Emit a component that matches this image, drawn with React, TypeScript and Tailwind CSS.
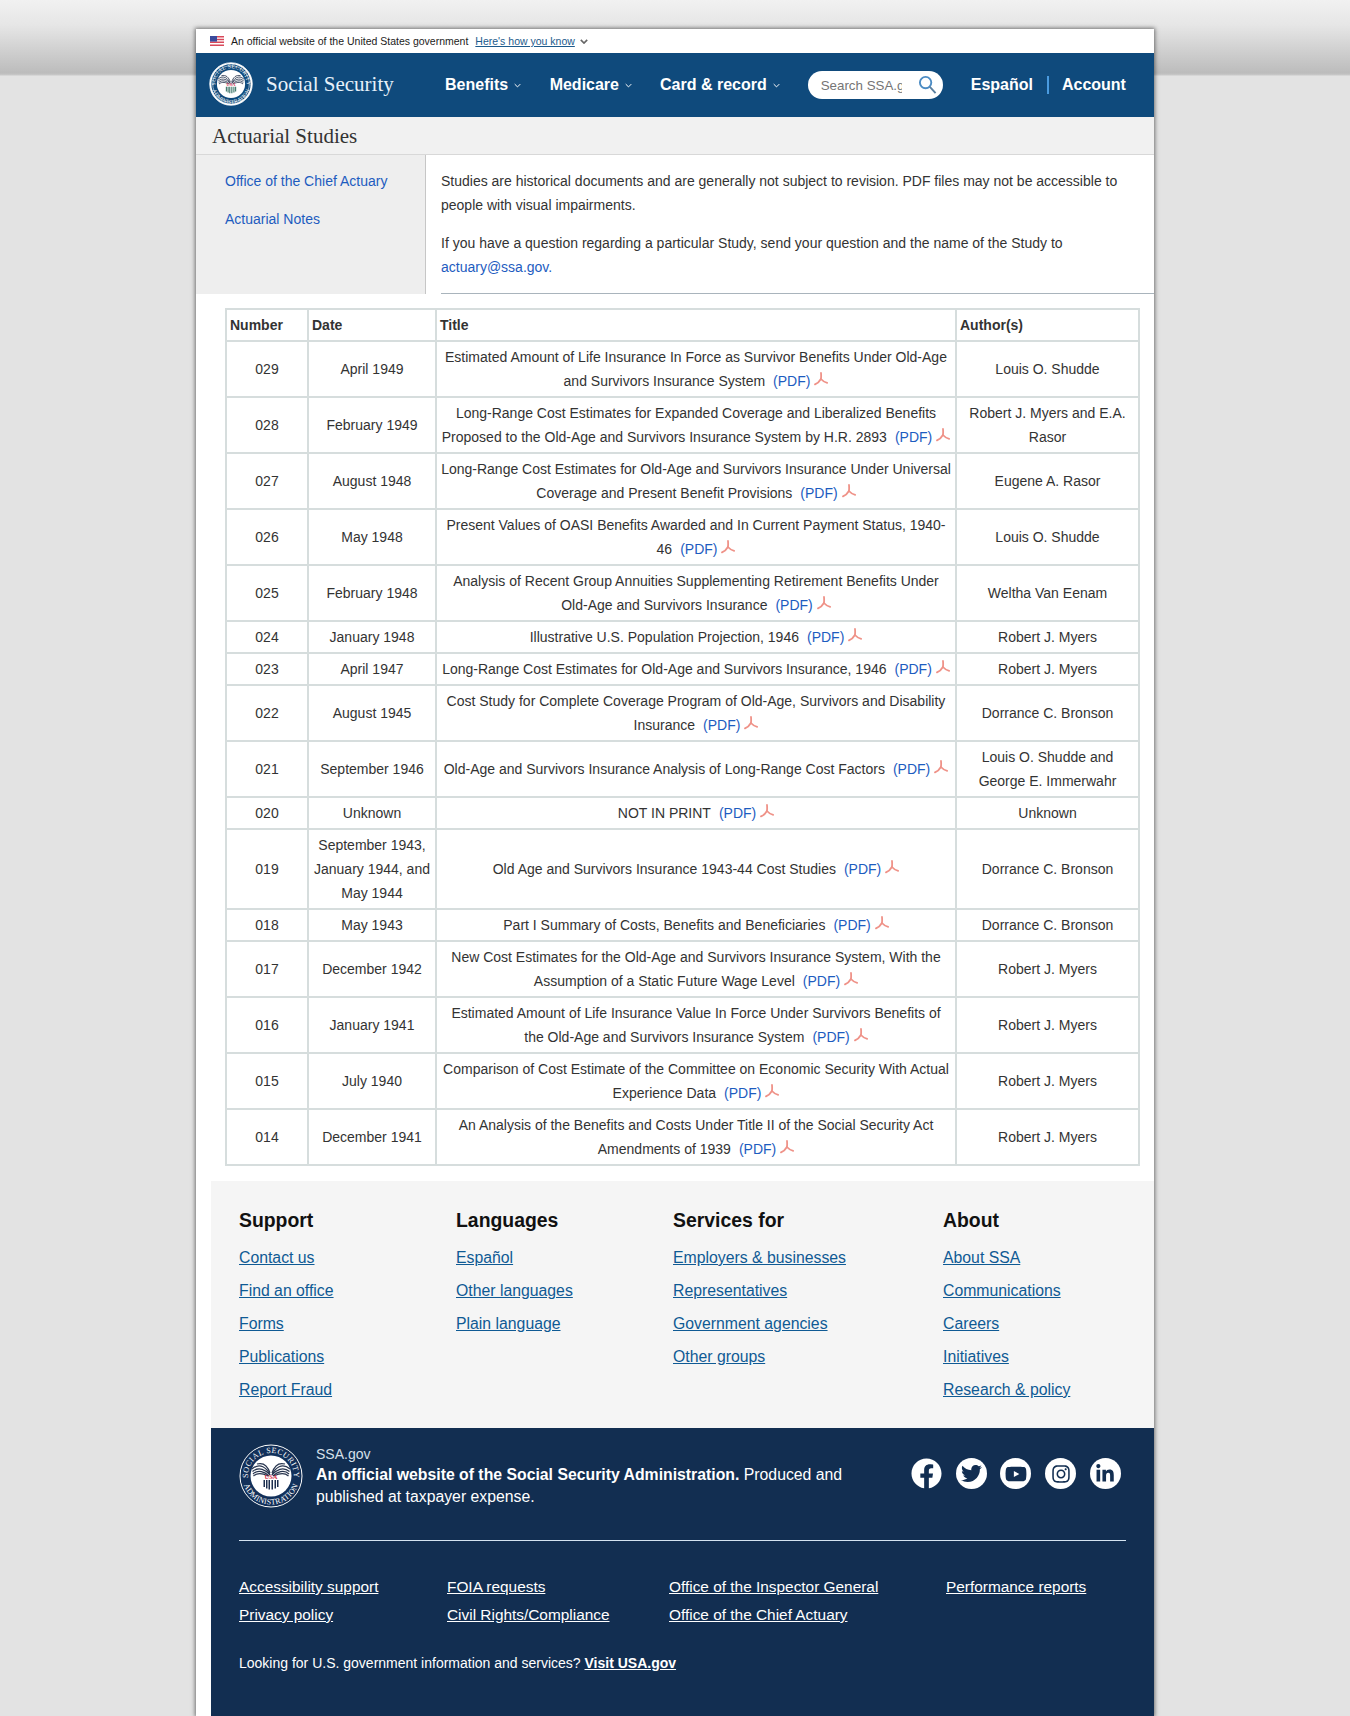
import { FaFacebook, FaInstagram, FaLinkedinIn, FaTwitter, FaYoutube } from 'react-icons/fa';

const rows = [
  { no: '029', date: 'April 1949', title: 'Estimated Amount of Life Insurance In Force as Survivor Benefits Under Old-Age and Survivors Insurance System', author: 'Louis O. Shudde' },
  { no: '028', date: 'February 1949', title: 'Long-Range Cost Estimates for Expanded Coverage and Liberalized Benefits Proposed to the Old-Age and Survivors Insurance System by H.R. 2893', author: 'Robert J. Myers and E.A. Rasor' },
  { no: '027', date: 'August 1948', title: 'Long-Range Cost Estimates for Old-Age and Survivors Insurance Under Universal Coverage and Present Benefit Provisions', author: 'Eugene A. Rasor' },
  { no: '026', date: 'May 1948', title: 'Present Values of OASI Benefits Awarded and In Current Payment Status, 1940-46', author: 'Louis O. Shudde' },
  { no: '025', date: 'February 1948', title: 'Analysis of Recent Group Annuities Supplementing Retirement Benefits Under Old-Age and Survivors Insurance', author: 'Weltha Van Eenam' },
  { no: '024', date: 'January 1948', title: 'Illustrative U.S. Population Projection, 1946', author: 'Robert J. Myers' },
  { no: '023', date: 'April 1947', title: 'Long-Range Cost Estimates for Old-Age and Survivors Insurance, 1946', author: 'Robert J. Myers' },
  { no: '022', date: 'August 1945', title: 'Cost Study for Complete Coverage Program of Old-Age, Survivors and Disability Insurance', author: 'Dorrance C. Bronson' },
  { no: '021', date: 'September 1946', title: 'Old-Age and Survivors Insurance Analysis of Long-Range Cost Factors', author: 'Louis O. Shudde and George E. Immerwahr' },
  { no: '020', date: 'Unknown', title: 'NOT IN PRINT', author: 'Unknown' },
  { no: '019', date: 'September 1943, January 1944, and May 1944', title: 'Old Age and Survivors Insurance 1943-44 Cost Studies', author: 'Dorrance C. Bronson' },
  { no: '018', date: 'May 1943', title: 'Part I Summary of Costs, Benefits and Beneficiaries', author: 'Dorrance C. Bronson' },
  { no: '017', date: 'December 1942', title: 'New Cost Estimates for the Old-Age and Survivors Insurance System, With the Assumption of a Static Future Wage Level', author: 'Robert J. Myers' },
  { no: '016', date: 'January 1941', title: 'Estimated Amount of Life Insurance Value In Force Under Survivors Benefits of the Old-Age and Survivors Insurance System', author: 'Robert J. Myers' },
  { no: '015', date: 'July 1940', title: 'Comparison of Cost Estimate of the Committee on Economic Security With Actual Experience Data', author: 'Robert J. Myers' },
  { no: '014', date: 'December 1941', title: 'An Analysis of the Benefits and Costs Under Title II of the Social Security Act Amendments of 1939', author: 'Robert J. Myers' },
];

const footerCols = [
  { head: 'Support', w: 'w-[217px]', links: ['Contact us', 'Find an office', 'Forms', 'Publications', 'Report Fraud'] },
  { head: 'Languages', w: 'w-[217px]', links: ['Español', 'Other languages', 'Plain language'] },
  { head: 'Services for', w: 'w-[270px]', links: ['Employers & businesses', 'Representatives', 'Government agencies', 'Other groups'] },
  { head: 'About', w: 'w-[180px]', links: ['About SSA', 'Communications', 'Careers', 'Initiatives', 'Research & policy'] },
];

const legal = [
  { w: 'w-[208px]', links: ['Accessibility support', 'Privacy policy'] },
  { w: 'w-[222px]', links: ['FOIA requests', 'Civil Rights/Compliance'] },
  { w: 'w-[277px]', links: ['Office of the Inspector General', 'Office of the Chief Actuary'] },
  { w: 'w-[180px]', links: ['Performance reports'] },
];

const PdfIcon = () => (
  <svg viewBox="0 0 14 14" className="inline-block w-[14px] h-[14px] ml-[4px] align-[0px]" fill="none" stroke="#ef9288" strokeWidth="1.8" strokeLinecap="round">
    <path d="M7 1c.2 2.2.2 4.3-.1 6C5.6 9.4 3.4 11.4 1 12.4" />
    <path d="M6.9 7c1.8 2 4 3.3 6.3 3.9" />
  </svg>
);

// feather strokes of one wing, the other is its mirror image
const wing = [
  'M31 31C28 24 21 18 13 25',
  'M31 31C27 26 20 22 13.5 27.5',
  'M30 32C26 28 19 25 14 30',
  'M29 32C25 30 19 28 14.5 32',
  'M31 29C29 23 25 18 18 20',
];

const Seal = ({ id, size, thick }: { id: string; size: number; thick?: boolean }) => (
  <svg viewBox="0 0 64 64" width={size} height={size} className="shrink-0">
    <circle cx="32" cy="32" r="31" fill={thick ? '#fff' : 'none'} stroke="#fff" strokeWidth="1" />
    <circle cx="32" cy="32" r={thick ? 28.6 : 30} fill={thick ? '#0f4a7c' : '#12305a'} />
    {thick && <circle cx="32" cy="32" r="26.6" fill="none" stroke="#fff" strokeWidth="0.8" />}
    <path id={`${id}t`} d="M9 32A23 23 0 0 1 55 32" fill="none" />
    <path id={`${id}b`} d="M3.5 32A28.5 28.5 0 0 0 60.5 32" fill="none" />
    <text fontFamily="'Liberation Serif', serif" fontSize="8" fill="#fff" letterSpacing="0.4" textAnchor="middle">
      <textPath href={`#${id}t`} startOffset="50%">SOCIAL SECURITY</textPath>
    </text>
    <text fontFamily="'Liberation Serif', serif" fontSize="8" fill="#fff" letterSpacing="0.2" textAnchor="middle">
      <textPath href={`#${id}b`} startOffset="50%">ADMINISTRATION</textPath>
    </text>
    <circle cx="32" cy="32" r="20.5" fill="#fff" />
    <g fill="none" stroke="#27344e" strokeWidth="1.2">
      {wing.map((d) => (
        <path key={d} d={d} />
      ))}
      <g transform="matrix(-1 0 0 1 64 0)">
        {wing.map((d) => (
          <path key={d} d={d} />
        ))}
      </g>
    </g>
    <text x="32" y="35" textAnchor="middle" fontFamily="'Liberation Serif', serif" fontSize="6.5" fontWeight="700" fill="#d8304a">USA</text>
    <path d="M24.5 36h1.5v7h-1.5zM27 36h1.5v8.5H27zM29.5 36H31v9.5h-1.5zM32.5 36H34v9.5h-1.5zM35.5 36H37v8.5h-1.5zM38 36h1.5v7H38z" fill={thick ? '#2c6a5c' : '#1c2f4f'} />
  </svg>
);

const Flag = () => (
  <svg viewBox="0 0 14 10" className="w-[14px] h-[10px]">
    <rect width="14" height="10" fill="#fff" />
    <path d="M0 0h14v1.4H0zM0 2.8h14v1.4H0zM0 5.6h14V7H0zM0 8.4h14V10H0z" fill="#d8485a" />
    <rect width="7" height="5.6" fill="#3a4a9c" />
  </svg>
);

const Chevron = ({ className, sw = 1.4 }: { className: string; sw?: number }) => (
  <svg viewBox="0 0 10 6" className={className} fill="none" stroke="currentColor" strokeWidth={sw}>
    <path d="M1 1l4 4 4-4" />
  </svg>
);

const Social = ({ children, text }: { children: React.ReactNode; text: string }) => (
  <div className={`w-[31px] h-[31px] rounded-full bg-white flex items-center justify-center text-[#122e51] ${text}`}>{children}</div>
);

const cell = 'border-2 border-[#d6dddd] px-[3px] py-[3px] text-center align-middle';
const headCell = 'border-2 border-[#d6dddd] px-[3px] py-[3px] text-left font-bold';

export default function App() {
  return (
    <div className="h-[1716px] overflow-hidden bg-[#e3e3e3] bg-[linear-gradient(#f1f1f1_0,#e6e6e6_25px,#bcbcbc_73px,#c9c9c9_75px,#e3e3e3_76px)] pt-[29px] font-['Liberation_Sans',sans-serif] text-[14px] leading-[24px] text-[#333]">
      <div className="ml-[196px] w-[958px] h-[1687px] bg-white shadow-[0_0_4px_1px_rgba(0,0,0,0.5)]">
        {/* gov banner */}
        <div className="h-[24px] flex items-center pl-[14px] text-[10.5px] text-[#1b1b1b]">
          <Flag />
          <span className="ml-[7px]">An official website of the United States government</span>
          <a className="ml-[7px] text-[#1c5a8c] underline">Here's how you know</a>
          <Chevron className="ml-[5px] w-[8px] h-[5px] mt-px text-[#666]" sw={2} />
        </div>

        {/* main nav */}
        <div className="h-[64px] bg-[#0f4a7c] flex items-center text-white">
          <div className="ml-[13px] -mt-[2px]">
            <Seal id="hdr" size={44} thick />
          </div>
          <span className="ml-[13px] w-[179px] -mt-[3px] font-['Liberation_Serif',serif] text-[21px] text-[#e6f1fa]">Social Security</span>
          <div className="flex items-center text-[16px] font-bold">
            <span>Benefits</span>
            <Chevron className="ml-[6px] mr-[28.5px] w-[7px] h-[5px]" />
            <span>Medicare</span>
            <Chevron className="ml-[6px] mr-[28px] w-[7px] h-[5px]" />
            <span>Card &amp; record</span>
            <Chevron className="ml-[6px] w-[7px] h-[5px]" />
          </div>
          <div className="ml-[28px] w-[135px] h-[28px] rounded-full bg-white flex items-center pl-[13px] overflow-hidden">
            <span className="w-[81px] overflow-hidden whitespace-nowrap mt-px text-[13.33px] text-[#757575]">Search SSA.gov</span>
            <svg viewBox="0 0 20 20" className="ml-[16px] w-[19px] h-[19px] -mt-[2px]" fill="none" stroke="#4c8cc4" strokeWidth="2">
              <circle cx="8" cy="8" r="6" />
              <path d="M12.5 12.5 18.5 19" stroke="#5a7f9f" />
            </svg>
          </div>
          <span className="ml-[28px] text-[16px] font-bold">Español</span>
          <span className="ml-[14px] w-[2px] h-[18px] bg-[#4a9be0]" />
          <span className="ml-[13px] text-[16px] font-bold">Account</span>
        </div>

        {/* page title */}
        <div className="h-[38px] bg-[#f1f1f1] border-b border-[#d8d8d8] pl-[16px] flex items-center font-['Liberation_Serif',serif] text-[21px] text-[#333]">
          Actuarial Studies
        </div>

        {/* intro */}
        <div className="flex h-[139px]">
          <div className="w-[230px] shrink-0 bg-[#eeeeee] border-r border-[#c6c6c6] pl-[29px] pt-[14px] text-[#1d5cbf]">
            <div>Office of the Chief Actuary</div>
            <div className="mt-[14px]">Actuarial Notes</div>
          </div>
          <div className="grow ml-[15px] border-b border-[#a9b4bc] pt-[14px] pr-[30px]">
            <p>Studies are historical documents and are generally not subject to revision. PDF files may not be accessible to people with visual impairments.</p>
            <p className="mt-[14px]">
              If you have a question regarding a particular Study, send your question and the name of the Study to <span className="text-[#1d5cbf]">actuary@ssa.gov.</span>
            </p>
          </div>
        </div>

        {/* studies table */}
        <table className="ml-[29px] mt-[14px] w-[913px] table-fixed border-collapse">
          <colgroup>
            <col className="w-[82px]" />
            <col className="w-[128px]" />
            <col className="w-[520px]" />
            <col className="w-[183px]" />
          </colgroup>
          <thead>
            <tr>
              <th className={headCell}>Number</th>
              <th className={headCell}>Date</th>
              <th className={headCell}>Title</th>
              <th className={headCell}>Author(s)</th>
            </tr>
          </thead>
          <tbody>
            {rows.map((r) => (
              <tr key={r.no}>
                <td className={cell}>{r.no}</td>
                <td className={cell}>{r.date}</td>
                <td className={cell}>
                  {r.title}
                  <span className="ml-[8px] text-[#1d5cbf]">(PDF)</span>
                  <PdfIcon />
                </td>
                <td className={cell}>{r.author}</td>
              </tr>
            ))}
          </tbody>
        </table>

        {/* footer links */}
        <div className="ml-[15px] mt-[15px] bg-[#f5f5f5] h-[247px] pl-[28px] pt-[25px] flex text-[15.8px]">
          {footerCols.map((c) => (
            <div key={c.head} className={c.w}>
              <div className="text-[19.4px] font-bold text-[#111] leading-[28px] mb-[7px]">{c.head}</div>
              {c.links.map((l) => (
                <div key={l} className="h-[33px] leading-[33px] text-[#0f5a94] underline">{l}</div>
              ))}
            </div>
          ))}
        </div>

        {/* footer dark */}
        <div className="ml-[15px] bg-[#122e51] h-[289px] px-[28px] pt-[16px] text-white">
          <div className="flex h-[97px] border-b border-[#d5e4f2]">
            <Seal id="ftr" size={64} />
            <div className="ml-[13px] w-[564px]">
              <div className="text-[14px] leading-[20px] text-[#d6e0ea]">SSA.gov</div>
              <div className="text-[15.8px] leading-[22px]">
                <b>An official website of the Social Security Administration.</b> Produced and published at taxpayer expense.
              </div>
            </div>
            <div className="ml-[31px] mt-[14px] flex gap-[13.7px]">
              <FaFacebook className="w-[31px] h-[31px] text-white" />
              <Social text="text-[21px]"><FaTwitter /></Social>
              <Social text="text-[22px]"><FaYoutube /></Social>
              <Social text="text-[20px]"><FaInstagram /></Social>
              <Social text="text-[20px]"><FaLinkedinIn /></Social>
            </div>
          </div>
          <div className="flex mt-[32px] text-[15.4px] leading-[28px]">
            {legal.map((c) => (
              <div key={c.links[0]} className={c.w}>
                {c.links.map((l) => (
                  <div key={l} className="underline">{l}</div>
                ))}
              </div>
            ))}
          </div>
          <div className="mt-[22px] text-[14px]">
            Looking for U.S. government information and services? <b className="underline">Visit USA.gov</b>
          </div>
        </div>
      </div>
    </div>
  );
}
